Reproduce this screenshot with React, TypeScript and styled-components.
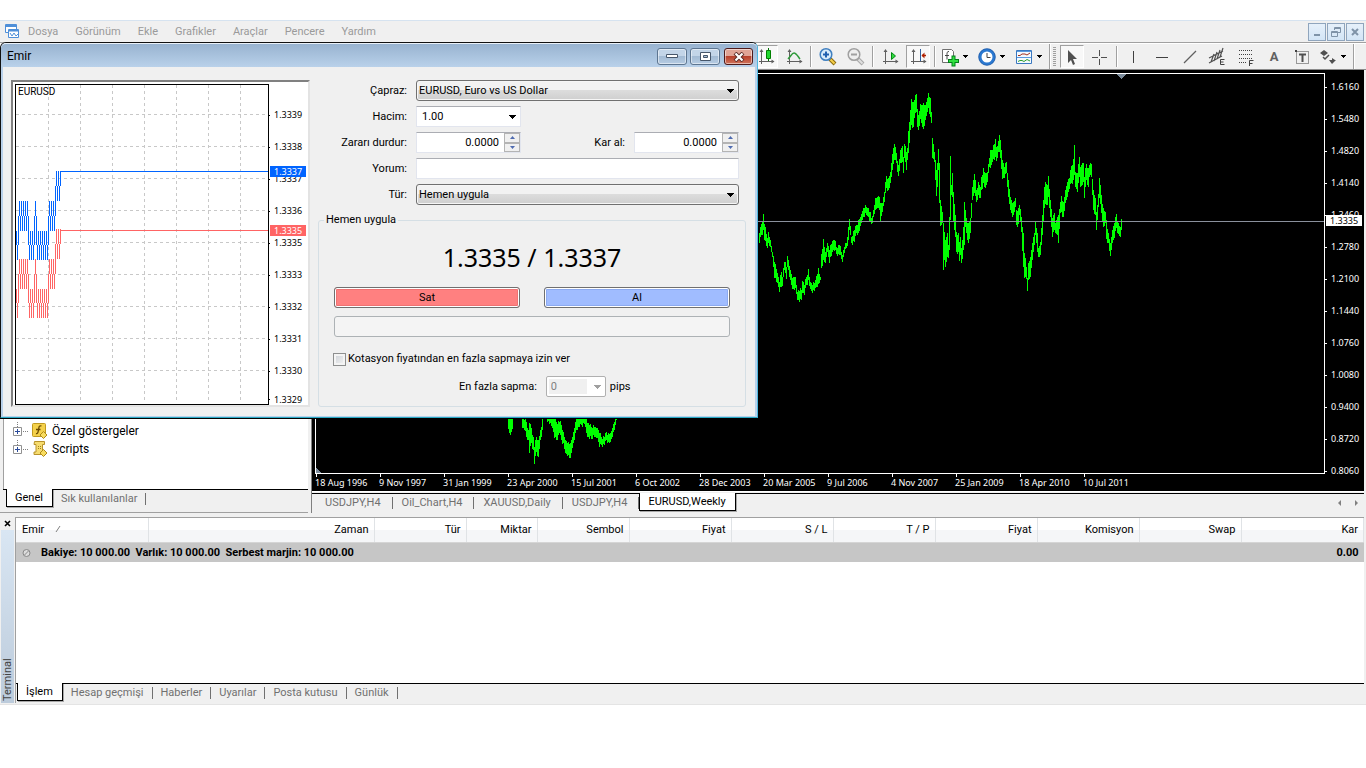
import React from 'react';
import styled, { createGlobalStyle, css } from 'styled-components';

const UI_FONT = 'Roboto, "Noto Sans", sans-serif';
const AXIS_FONT = '"Noto Sans", "Open Sans", sans-serif';

const GlobalStyle = createGlobalStyle`
  *, *::before, *::after { box-sizing: border-box; }
  body { margin: 0; background: #fff; color: #000; font: 11px/14px ${UI_FONT}; }
  button, input, select { font: inherit; color: inherit; margin: 0; }
  button { padding: 0; border: 0; background: none; }
`;

/* ---------- price history ---------- */

type Sample = [number, number, number];

// x, high, low in thirds of a pixel
const HISTORY: Sample[] = [
  [28,460,490],[33,432,465],[39,402,450],[44,432,480],[51,475,505],[55,455,490],[62,480,500],[66,515,530],[74,545,595],[82,580,610],
  [88,605,635],[93,577,620],[98,590,618],[103,545,570],[108,560,597],[113,528,560],[120,570,600],[126,595,628],[132,590,630],[137,592,625],
  [142,635,660],[148,632,665],[154,630,660],[158,603,640],[164,615,645],[168,590,615],[175,568,600],[180,605,628],[188,615,638],[196,600,625],
  [204,565,612],[210,590,600],[215,523,565],[221,478,540],[227,515,548],[233,490,515],[239,510,550],[246,484,515],[253,480,512],[260,500,522],
  [267,495,525],[276,525,545],[283,500,520],[290,488,505],[294,440,480],[298,418,450],[304,470,490],[312,450,485],[318,435,460],[324,420,460],
  [330,410,437],[338,392,420],[345,376,400],[352,385,408],[360,395,425],[364,415,433],[371,390,410],[376,355,390],[381,352,385],[388,352,390],
  [391,370,422],[398,370,395],[404,335,365],[410,288,325],[416,295,330],[422,275,310],[428,222,270],[433,193,240],[439,220,250],[445,255,287],
  [451,210,250],[457,198,245],[460,230,278],[464,193,235],[468,215,270],[473,205,240],[476,153,220],[481,90,150],[485,57,135],[489,65,140],
  [494,60,115],[499,42,95],[503,88,140],[506,105,150],[512,72,118],[517,75,140],[521,68,147],[527,75,120],[531,55,95],[535,38,85],
  [540,55,110],[544,95,130],[547,175,235],[553,215,245],[557,240,300],[560,270,347],[563,250,320],[565,207,270],[569,250,370],[572,360,437],
  [576,395,430],[579,430,570],[583,455,540],[587,480,560],[592,460,530],[596,495,535],[599,410,510],[601,228,420],[604,315,345],[607,278,350],
  [611,335,425],[615,405,470],[620,455,515],[625,460,515],[628,485,542],[632,472,525],[635,505,550],[639,440,510],[642,365,495],[646,390,440],
  [650,415,460],[656,430,488],[660,415,460],[664,370,415],[668,320,360],[673,283,340],[679,330,365],[684,305,345],[690,320,355],[695,290,330],
  [700,265,310],[706,280,325],[712,275,305],[717,235,260],[722,210,265],[728,210,245],[735,178,232],[739,200,242],[744,183,215],[748,165,215],
  [752,180,235],[757,240,298],[764,262,295],[769,245,280],[774,300,350],[780,350,390],[786,370,410],[791,365,405],[796,355,380],[800,390,435],
  [804,385,432],[809,375,405],[815,410,455],[820,460,560],[824,520,595],[828,562,598],[832,595,632],[836,550,600],[841,530,590],[846,490,540],
  [852,460,495],[857,425,465],[861,460,515],[866,505,530],[872,485,525],[878,405,465],[884,320,385],[887,306,372],[892,315,375],[896,288,350],
  [902,360,410],[907,415,470],[912,400,450],[917,430,460],[921,410,465],[925,405,490],[930,365,400],[934,348,395],[940,365,412],[946,330,370],
  [952,305,350],[958,293,328],[963,258,310],[969,238,300],[972,195,285],[977,275,320],[982,280,335],[987,232,290],[992,260,320],[996,248,315],
  [1000,250,305],[1003,290,353],[1009,252,300],[1014,265,320],[1019,255,290],[1024,252,290],[1029,330,390],[1035,355,405],[1040,395,450],
  [1044,342,380],[1049,295,355],[1054,345,400],[1059,385,440],[1065,395,430],[1070,420,478],[1076,460,490],[1082,490,527],[1087,450,490],
  [1093,430,475],[1100,402,445],[1106,430,462],[1110,440,470],[1114,418,450],
];

const EARLY_LOWS: Sample[][] = [
  [[566,530,568],[572,530,585],[577,530,566]],
  [[607,525,565],[612,540,570],[618,545,590],[624,570,600],[628,550,640],[634,565,610],[639,590,630],[643,620,672],[648,590,635],[654,600,650],[660,570,600],[664,560,590],[668,525,570]],
  [[682,525,545],[690,535,550],[697,530,565],[704,535,595],[710,545,600],[718,545,580],[724,555,600],[730,575,610],[736,600,640],[744,605,645],[751,610,655],[757,590,625],[764,565,600],[770,537,570],[776,520,560],[784,525,555],[792,530,552],[798,535,580],[806,550,590],[814,560,598],[820,555,585],[826,560,590],[832,565,595],[838,580,620],[844,590,615],[852,590,615],[858,577,600],[864,580,605],[870,580,605],[876,565,590],[882,545,570],[887,530,555],[890,515,540]],
];

function bars(samples: Sample[], originX: number, originY: number): string {
  const px = samples.map(([x, h, l]) => [originX + Math.floor(x / 3), originY + h / 3, originY + l / 3]);
  let d = '';
  for (let i = 0; i < px.length; i++) {
    const [x, h, l] = px[i];
    const next = px[i + 1] ?? [x + 1, h, l];
    const span = Math.max(1, next[0] - x);
    for (let k = 0; k < span; k++) {
      const t = k / span;
      const wiggle = k === 0 ? 0 : ((x + k) * 7) % 5 - 2;
      const top = Math.round(h + (next[1] - h) * t + wiggle);
      const bottom = Math.round(l + (next[2] - l) * t + wiggle);
      d += `M${x + k} ${top}h1V${Math.max(bottom, top + 3)}h-1z`;
    }
  }
  return d;
}

const CHART_PATH = [bars(HISTORY, 750, 80), ...EARLY_LOWS.map((part) => bars(part, 320, 240))].join('');

/* ---------- tick chart ---------- */

const range = (from: number, to: number) => {
  const out: number[] = [];
  for (let x = from; x <= to; x += 2) out.push(x);
  return out;
};

const TICK_BARS: { top: number; bottom: number; xs: number[] }[] = [
  { top: 171, bottom: 186, xs: [56, 58, 60] },
  { top: 186, bottom: 201, xs: [55, 57, 59] },
  { top: 201, bottom: 216, xs: [...range(19, 27), 35, ...range(49, 55)] },
  { top: 216, bottom: 231, xs: [...range(18, 28), 34, 36, ...range(48, 54)] },
  { top: 231, bottom: 245, xs: [16, 18, ...range(28, 48)] },
  { top: 245, bottom: 260, xs: [17, ...range(29, 33), ...range(37, 47)] },
];

const tickPath = (shift: number) =>
  TICK_BARS.map((r) => r.xs.map((x) => `M${x} ${r.top + shift}h1V${r.bottom + shift}h-1z`).join('')).join('');

/* ---------- shell ---------- */

const Page = styled.div`
  position: relative;
  min-width: 1100px;
  padding-top: 20px;
`;

const MenuBar = styled.nav`
  display: flex;
  align-items: center;
  height: 23px;
  padding: 0 2px 0 5px;
  background: #f0f0f0;
  border-top: 1px solid #d6e3f0;
  border-bottom: 1px solid #a0a0a0;
`;

const MenuList = styled.div`
  display: flex;
  gap: 17px;
  margin-left: 8px;
  flex: 1;
`;

const MenuItem = styled.button`
  color: #9a9a9a;
`;

const MdiButton = styled.button`
  display: grid;
  place-items: center;
  width: 18px;
  height: 18px;
  margin-left: 1px;
  border: 1px solid #8fa5bd;
  background: linear-gradient(#e6f0fa, #d3e5f6);
`;

const Toolbar = styled.div`
  display: flex;
  align-items: center;
  gap: 4px;
  height: 27px;
  padding-left: 754px;
  background: #f0f0f0;
  border-top: 1px solid #fff;
  border-bottom: 1px solid #8a8a8a;
`;

const ToolButton = styled.button<{ $pressed?: boolean; $menu?: boolean }>`
  display: flex;
  align-items: center;
  justify-content: ${(p) => (p.$menu ? 'flex-start' : 'center')};
  gap: 2px;
  flex: none;
  width: ${(p) => (p.$menu ? 33 : 24)}px;
  height: 23px;
  ${(p) => p.$pressed && css`
    background: #f8f8f8;
    border: 1px solid #fff;
    border-top-color: #a0a0a0;
    border-left-color: #a0a0a0;
  `}
`;

const Separator = styled.span`
  flex: none;
  width: 2px;
  height: 21px;
  border-left: 1px solid #a0a0a0;
  border-right: 1px solid #fff;
`;

const BandEdge = styled(Separator)`
  height: 25px;
  margin-left: -2px;
`;

const BandStart = styled.span`
  display: flex;
  align-items: center;
  gap: 2px;
`;

const Grip = styled.span`
  flex: none;
  width: 3px;
  height: 19px;
  background: repeating-linear-gradient(#a0a0a0 0 1px, #f0f0f0 1px 2px);
`;

const Workspace = styled.div`
  display: flex;
  background: #f0f0f0;
`;

/* ---------- navigator ---------- */

const Navigator = styled.aside`
  display: flex;
  flex-direction: column;
  flex: none;
  width: 308px;
  padding: 0 0 3px 3px;
  border-bottom: 1px solid #a0a0a0;
`;

const Tree = styled.ul`
  display: flex;
  flex-direction: column;
  justify-content: flex-end;
  flex: 1;
  margin: 0;
  padding: 0 0 31px 9px;
  list-style: none;
  background: #fff;
  border-left: 1px solid #a0a0a0;
`;

const TreeItem = styled.li`
  display: flex;
  align-items: center;
  height: 18px;
  font-size: 12px;
  svg + svg { margin-right: 4px; }
`;

const TabStrip = styled.div<{ $inset?: number }>`
  display: flex;
  align-items: flex-start;
  height: 20px;
  padding-left: ${(p) => p.$inset ?? 0}px;
  background: #f0f0f0;
  border-top: 1px solid #000;
`;

const Tab = styled.button<{ $active?: boolean; $roomy?: boolean }>`
  position: relative;
  flex: none;
  height: 18px;
  padding: ${(p) => (p.$roomy ? '0 12px 0 9px' : '0 9px 0 8px')};
  color: #707070;
  ${(p) => p.$active
    ? css`
        margin-top: -1px;
        padding: 0 9px 0 8px;
        color: #000;
        background: #fff;
        border: 1px solid #000;
        border-top: 0;
        box-shadow: 1px 1px 0 #a8a8a8;
      `
    : css`
        &::after {
          content: '';
          position: absolute;
          right: 0;
          top: 3px;
          height: 12px;
          border-right: 1px solid #707070;
        }
      `}
`;

/* ---------- chart ---------- */

const ChartColumn = styled.main`
  display: flex;
  flex-direction: column;
  flex: 1;
  min-width: 0;
  margin: 0 2px 0 3px;
  border-left: 1px solid #808080;
`;

const ChartFrame = styled.section`
  display: flex;
  margin-bottom: 1px;
  padding: 3px 0 0 3px;
  color: #fff;
  background: #000;
  border-bottom: 1px solid #fff;
  font-family: ${AXIS_FONT};
  font-size: 9px;
`;

const PlotColumn = styled.div`
  flex: 1;
  min-width: 0;
`;

const Plot = styled.svg`
  display: block;
  width: 100%;
  height: 401px;
  border: 1px solid #fff;
`;

const DateAxis = styled.div`
  display: flex;
  height: 17px;
  overflow: hidden;
`;

const DateLabel = styled.span`
  position: relative;
  flex: none;
  width: 64px;
  line-height: 17px;
  white-space: nowrap;
  &::before {
    content: '';
    position: absolute;
    left: 1px;
    top: 0;
    height: 3px;
    border-left: 1px solid #fff;
  }
`;

const PriceAxis = styled.div`
  position: relative;
  width: 39px;
  margin-top: -2px;
`;

const PriceLabel = styled.div`
  display: flex;
  align-items: center;
  gap: 4px;
  height: 32px;
  &::before {
    content: '';
    width: 2px;
    height: 1px;
    background: #fff;
  }
`;

const CurrentPrice = styled.div<{ $top: number; $left: number; $fill: string; $ink: string }>`
  position: absolute;
  top: ${(p) => p.$top}px;
  left: ${(p) => p.$left}px;
  width: 36px;
  height: 11px;
  padding-left: 4px;
  line-height: 11px;
  font-family: ${AXIS_FONT};
  font-size: 9px;
  color: ${(p) => p.$ink};
  background: ${(p) => p.$fill};
`;

const TabScroll = styled.div`
  display: flex;
  gap: 12px;
  margin: 5px 5px 0 auto;
`;

/* ---------- terminal ---------- */

const Terminal = styled.section`
  display: flex;
  padding: 4px 0 1px;
  background: #f0f0f0;
  border-bottom: 1px solid #e4e4e4;
`;

const SideRail = styled.div`
  display: flex;
  flex-direction: column;
  align-items: center;
  width: 14px;
  margin-right: 1px;
`;

const CloseGlyph = styled.button`
  display: grid;
  place-items: center;
  width: 14px;
  height: 13px;
`;

const RailTitle = styled.div`
  flex: 1;
  width: 13px;
  padding: 2px 0;
  line-height: 13px;
  color: #444;
  background: linear-gradient(#bccbdb, #d9e6f3);
  writing-mode: vertical-rl;
  transform: rotate(180deg);
`;

const TerminalBody = styled.div`
  flex: 1;
  min-width: 0;
  margin-right: 2px;
  border-top: 1px solid #a0a0a0;
  border-left: 1px solid #a0a0a0;
  background: #fff;
`;

const OrdersArea = styled.div`
  min-height: 165px;
`;

const Orders = styled.table`
  width: 100%;
  table-layout: fixed;
  border-collapse: collapse;
`;

const HeadCell = styled.th<{ $first?: boolean }>`
  height: 24px;
  padding: 1px 5px 0 6px;
  font-weight: 400;
  text-align: ${(p) => (p.$first ? 'left' : 'right')};
  background: linear-gradient(#fff 50%, #f5f6f8 50%);
  border-right: 1px solid #e0e3e6;
  border-bottom: 1px solid #d5d5d5;
`;

const BalanceCell = styled.td<{ $end?: boolean }>`
  height: 20px;
  padding: 1px 5px 0 6px;
  font-weight: 700;
  white-space: pre;
  text-align: ${(p) => (p.$end ? 'right' : 'left')};
  background: #c6c6c6;
`;

const BalanceIcon = styled.svg`
  margin-right: 10px;
  vertical-align: -2px;
`;

/* ---------- order dialog ---------- */

const Dialog = styled.div`
  position: absolute;
  left: 0;
  top: 42px;
  width: 758px;
  padding: 0 2px 1px;
  background: #b9d1ea;
  border: 1px solid #111;
  border-right-color: #4fb8e0;
  border-bottom-color: #2aa9c4;
  border-radius: 6px 6px 0 0;
  box-shadow: 0 1px 0 #000;
`;

const TitleBar = styled.header`
  display: flex;
  align-items: flex-start;
  height: 24px;
  margin: 0 -2px;
  padding: 4px 4px 0 6px;
  background: linear-gradient(#98b3d0, #b9d1ea);
  border-top: 1px solid #e8f0f8;
  border-radius: 5px 5px 0 0;
`;

const Title = styled.h1`
  flex: 1;
  margin: 1px 0 0;
  font-size: 12px;
  line-height: 14px;
  font-weight: 400;
`;

const CaptionButton = styled.button<{ $close?: boolean }>`
  display: grid;
  place-items: center;
  width: ${(p) => (p.$close ? 29 : 30)}px;
  height: 17px;
  margin-left: ${(p) => (p.$close ? 4 : 3)}px;
  border: 1px solid ${(p) => (p.$close ? '#4e1a1a' : '#5d7590')};
  border-radius: 3px;
  box-shadow: inset 0 0 0 1px rgba(255, 255, 255, 0.5);
  background: ${(p) => (p.$close
    ? 'linear-gradient(#e0a496 45%, #b8402c 50%, #d0745c)'
    : 'linear-gradient(#c3d5e8 45%, #a3bbd4 50%, #b6cce3)')};
`;

const DialogBody = styled.div`
  display: flex;
  gap: 8px;
  padding: 13px 9px 9px 8px;
  background: #f0f0f0;
`;

const TickPanel = styled.div`
  position: relative;
  display: flex;
  flex: none;
  width: 299px;
  height: 327px;
  padding: 2px 0 0 2px;
  background: #fff;
  border: 2px solid #e3e3e3;
  border-top-color: #808080;
  border-left-color: #808080;
`;

const TickPlot = styled.svg`
  flex: none;
  width: 254px;
  height: 321px;
  border: 1px solid #000;
`;

const TickAxis = styled.div`
  padding-top: 15px;
  font-family: ${AXIS_FONT};
  font-size: 9px;
`;

const TickLabel = styled.div`
  display: flex;
  align-items: center;
  gap: 4px;
  height: 32px;
  &:last-child { height: 25px; }
  &::before {
    content: '';
    width: 1px;
    height: 1px;
    background: #000;
  }
`;

const OrderForm = styled.form`
  flex: 1;
`;

const Fields = styled.div`
  display: grid;
  grid-template-columns: 89px 105px 1fr 105px;
  gap: 5px 9px;
  align-items: center;
  padding-right: 7px;
`;

const FieldLabel = styled.label<{ $column?: number }>`
  grid-column: ${(p) => p.$column ?? 1};
  justify-self: end;
  white-space: nowrap;
`;

const field = css`
  width: 100%;
  height: 21px;
  border: 1px solid #e2e5ee;
  border-top-color: #abadb3;
  background: #fff;
`;

const Wide = styled.div`
  position: relative;
  grid-column: 2 / -1;
`;

const Cell = styled.div<{ $column?: number }>`
  position: relative;
  grid-column: ${(p) => p.$column ?? 2};
`;

const TextField = styled.input<{ $numeric?: boolean }>`
  ${field}
  display: block;
  padding: 0 ${(p) => (p.$numeric ? 21 : 5)}px 0 5px;
  text-align: ${(p) => (p.$numeric ? 'right' : 'left')};
`;

const Select = styled.select<{ $look: 'raised' | 'flat' | 'disabled' }>`
  ${field}
  display: block;
  appearance: none;
  opacity: 1;
  padding: 0 2px;
  ${(p) => p.$look === 'raised' && css`
    border: 1px solid #707070;
    border-radius: 3px;
    background: linear-gradient(#f2f2f2 50%, #dcdcdc 50%, #cfcfcf);
    box-shadow: inset 0 0 0 1px #f6f6f6;
  `}
  ${(p) => p.$look === 'flat' && css`
    padding-left: 5px;
  `}
  ${(p) => p.$look === 'disabled' && css`
    padding-left: 4px;
    color: #808080;
    border: 1px solid #b0b0b0;
    border-radius: 2px;
    background: linear-gradient(#f0f0f0, #f0f0f0) 2px 2px / 38px 15px no-repeat, #fff;
  `}
`;

const Caret = styled.span`
  position: absolute;
  right: 5px;
  top: 9px;
  pointer-events: none;
  svg { display: block; }
`;

const Spinner = styled.div`
  position: absolute;
  right: 1px;
  top: 1px;
  display: flex;
  flex-direction: column;
  width: 16px;
  height: 19px;
`;

const SpinButton = styled.button`
  display: grid;
  place-items: center;
  flex: 1;
  background: #f0f0f0;
  border: 1px solid #b4b4b4;
`;

const Group = styled.fieldset`
  min-width: 0;
  margin: 8px 0 0;
  padding: 0 15px 9px;
  border: 1px solid #d5dfe5;
  border-radius: 3px;
`;

const Legend = styled.legend`
  margin-left: -10px;
  padding: 0 2px;
`;

const Quote = styled.output`
  display: block;
  margin: 11px 0;
  font-family: ${AXIS_FONT};
  font-size: 25px;
  line-height: 38px;
  text-align: center;
`;

const TradeRow = styled.div`
  display: grid;
  grid-template-columns: 1fr 1fr;
  gap: 24px;
`;

const TradeButton = styled.button<{ $side: 'sell' | 'buy' }>`
  height: 21px;
  border: 1px solid #707070;
  border-radius: 3px;
  background: ${(p) => (p.$side === 'sell' ? '#ff8080' : '#a0bcff')};
  box-shadow: inset 0 0 0 1px #fff, inset 0 0 0 2px ${(p) => (p.$side === 'sell' ? '#ee7272' : '#8caaf0')};
`;

const StatusButton = styled.button`
  display: block;
  width: 100%;
  height: 21px;
  margin-top: 8px;
  background: #f4f4f4;
  border: 1px solid #adb2b5;
  border-radius: 3px;
`;

const CheckRow = styled.label`
  display: flex;
  align-items: center;
  gap: 2px;
  height: 16px;
  margin: 14px 0 9px -1px;
`;

const CheckBox = styled.input`
  appearance: none;
  width: 13px;
  height: 13px;
  border: 1px solid #8e8f8f;
  background: linear-gradient(135deg, #cbcfd5, #f6f6f6);
  box-shadow: inset 0 0 0 2px #f4f4f4;
`;

const DeviationRow = styled.div`
  display: flex;
  align-items: center;
  gap: 4px;
  padding-left: 125px;
`;

const DeviationField = styled.div`
  position: relative;
  width: 60px;
  margin-left: 5px;
`;

/* ---------- small drawings ---------- */

const DownCaret = ({ fill = '#000' }: { fill?: string }) => (
  <svg width="7" height="4" shapeRendering="crispEdges"><path d="M0 0h7v1h-1v1h-1v1h-1v1h-1v-1h-1v-1h-1v-1h-1z" fill={fill} /></svg>
);

const SmallCaret = () => (
  <svg width="7" height="3" shapeRendering="crispEdges"><path d="M1 0h5v1h-1v1h-1v1h-1v-1h-1v-1h-1z" fill="#000" /></svg>
);

const Icon = ({ children }: { children: React.ReactNode }) => (
  <svg width="20" height="20" viewBox="0 0 20 20" fill="none" stroke="#606060">{children}</svg>
);

const Axes = () => (
  <>
    <path d="M5.500 3v14M3 14.500h15" />
    <path d="M5.500 2l-2 3h4zM18.500 14.500l-3-2v4z" fill="#606060" stroke="none" />
  </>
);

const CandleIcon = () => (
  <Icon><Axes /><path d="M12.500 1v13" stroke="#007000" /><path d="M10.500 3.500h4v8h-4z" fill="#20d830" stroke="#008000" /></Icon>
);
const LineIcon = () => <Icon><Axes /><path d="M4 12c3-3 4-6 6-6s3 2 6 6" stroke="#2f9a3a" strokeWidth="1.500" /></Icon>;
const ZoomIcon = ({ out }: { out?: boolean }) => (
  <Icon>
    <path d="M12 12l5 5" stroke={out ? '#a8a8a8' : '#8a6a10'} strokeWidth="4" />
    <path d="M12.500 12.500l4 4" stroke={out ? '#e0e0e0' : '#f6d04a'} strokeWidth="2" />
    <circle cx="8" cy="7.500" r="5.800" fill={out ? '#eee' : '#d8ecfb'} stroke={out ? '#a0a0a0' : '#3f7fc0'} strokeWidth="1.500" />
    <path d={out ? 'M5 7.500h6' : 'M5 7.500h6M8 4.500v6'} stroke={out ? '#a0a0a0' : '#2060b0'} strokeWidth="2" />
  </Icon>
);
const AutoScrollIcon = () => <Icon><Axes /><path d="M11.500 5.500v7l4-3.500z" fill="#30d840" stroke="#008a10" /></Icon>;
const ShiftIcon = () => (
  <Icon><Axes /><path d="M12.500 2v12" stroke="#3060a0" /><path d="M18 8.500h-4" stroke="#b02000" strokeWidth="1.500" /><path d="M16.500 5.500v6l-3-3z" fill="#b02000" stroke="none" /></Icon>
);
const IndicatorIcon = () => (
  <Icon>
    <path d="M2.500 2.500h9l2 2v11h-11z" fill="#fff" stroke="#707070" />
    <path d="M9 4.500c-2 0-2 1-2 3v5M5 8.500h4" stroke="#444" />
    <path d="M13.500 8.500v11M8 14h11" stroke="#00801a" strokeWidth="4" />
    <path d="M13.500 9.500v9M9 14h9" stroke="#30e040" strokeWidth="2" />
  </Icon>
);
const ClockIcon = () => (
  <Icon><circle cx="10" cy="10" r="7" fill="#fff" stroke="#2a78d0" strokeWidth="3" /><circle cx="10" cy="10" r="8.300" stroke="#1a4f98" strokeWidth="0.600" /><path d="M10 6v4.500h3.500" stroke="#444" /></Icon>
);
const TemplateIcon = () => (
  <Icon>
    <path d="M2.500 3.500h15v13h-15z" fill="#f4faff" stroke="#3a78c0" /><path d="M3 4.500h14M3 10.500h14" stroke="#5a9ae0" />
    <path d="M4 8.500h2l2-1.500h3l2 1 3-2" stroke="#a03020" /><path d="M4 14.500l2-1h2l2 1 3-2 3 1.500" stroke="#30a030" />
  </Icon>
);
const ArrowIcon = () => <Icon><path d="M6 3v13l3-3 2 5 2-1-2-5h4z" fill="#505050" stroke="none" /></Icon>;
const CrosshairIcon = () => <Icon><path d="M9.500 3v6M9.500 12v6M2 10.500h6M11 10.500h6" stroke="#505050" /></Icon>;
const VLineIcon = () => <Icon><path d="M9.500 4v12" stroke="#404040" /></Icon>;
const HLineIcon = () => <Icon><path d="M4 10.500h12" stroke="#404040" /></Icon>;
const TrendIcon = () => <Icon><path d="M4 16L16 4" stroke="#606060" strokeWidth="1.300" /></Icon>;
const ChannelIcon = () => (
  <Icon><path d="M1 11l14-7M1 16l13-7M3 15l3-8M6 14l3-9M9 12l3-9M12 10l3-9" stroke="#505050" strokeWidth="1.200" /><path d="M16.500 12.500h-4v5h4M12.500 15h3" stroke="#404040" /></Icon>
);
const FiboIcon = () => (
  <Icon><path d="M3 3.500h14M3 7.500h14M3 11.500h14M3 15.500h8" strokeDasharray="1 1" stroke="#404040" /><path d="M13.500 19v-5.500h4M13.500 16.500h3" stroke="#404040" /></Icon>
);
const LabelIcon = () => (
  <Icon><path d="M4.500 4.500h12v12h-12z" strokeDasharray="1 1" stroke="#404040" /><path d="M3 3h2v2h-2z" fill="#404040" stroke="none" /><path d="M7 7.500h7M10.500 8v7" stroke="#505050" strokeWidth="2" /></Icon>
);
const MarksIcon = () => (
  <Icon>
    <path d="M6 3l4 3-4 3-4-3zM11 13l3 0 0-2 3 2 1 0-4 4z" fill="#505050" stroke="none" />
    <path d="M5 10l2 2 4-4" strokeWidth="1.500" stroke="#505050" />
  </Icon>
);

const ToolLetter = styled.span`
  color: #606060;
  font-size: 13px;
  font-weight: 700;
`;

const AppIcon = () => (
  <svg width="15" height="15" viewBox="0 0 15 15" fill="none" stroke="#4f8fd8">
    <path d="M0.500 0.500h11v8h-11z" fill="#fff" /><path d="M1 2h10" strokeWidth="2" />
    <path d="M3.500 5.500h10v8h-10z" fill="#fff" /><path d="M4 6.500h9" strokeWidth="2" />
    <path d="M5 9l2 3 2-3 2 3 2-2" />
  </svg>
);

const Expander = () => (
  <svg width="18" height="18" viewBox="0 0 18 18" fill="none">
    <path d="M4.500 0v5M10 9.500h6" stroke="#808080" strokeDasharray="1 1" />
    <path d="M0.500 5.500h8v8h-8z" fill="#fff" stroke="#919191" />
    <path d="M2 9.500h5M4.500 7v5" stroke="#2b4b9b" />
  </svg>
);

const FunctionIcon = () => (
  <svg width="17" height="16" viewBox="0 0 17 16" fill="none">
    <rect x="1.500" y=".5" width="13" height="13" rx="1" fill="#f4d14c" stroke="#c09a20" />
    <path d="M10.500 3c-3-1-2.500 2-3 4s-.5 4-2.500 3.500M5 6.500h4.500" stroke="#6a4a00" strokeWidth="1.300" />
    <path d="M12.500 8.500l3.500 3.500-3.500 3.500-3.500-3.500z" fill="#f8dc60" stroke="#b08a18" />
  </svg>
);

const ScriptIcon = () => (
  <svg width="17" height="16" viewBox="0 0 17 16" fill="none">
    <path d="M3.500 .5h10v3h-2v7h1v3h-9.500v-2.500h2v-7.500h-2z" fill="#f6dc70" stroke="#b8922a" />
    <path d="M7 5.500h3M7 7.500h3" stroke="#a08020" strokeDasharray="1 1" />
    <path d="M12.500 8.500l3.500 3.500-3.500 3.500-3.500-3.500z" fill="#f8dc60" stroke="#b08a18" />
  </svg>
);

/* ---------- data ---------- */

const MENU = ['Dosya', 'Görünüm', 'Ekle', 'Grafikler', 'Araçlar', 'Pencere', 'Yardım'];
const PRICES = ['1.6160', '1.5480', '1.4820', '1.4140', '1.3460', '1.2780', '1.2100', '1.1440', '1.0760', '1.0080', '0.9400', '0.8720', '0.8060'];
const DATES = ['18 Aug 1996', '9 Nov 1997', '31 Jan 1999', '23 Apr 2000', '15 Jul 2001', '6 Oct 2002', '28 Dec 2003', '20 Mar 2005', '9 Jul 2006', '4 Nov 2007', '25 Jan 2009', '18 Apr 2010', '10 Jul 2011'];
const TICKS = ['1.3339', '1.3338', '1.3337', '1.3336', '1.3335', '1.3333', '1.3332', '1.3331', '1.3330', '1.3329'];
const CHART_TABS = ['USDJPY,H4', 'Oil_Chart,H4', 'XAUUSD,Daily', 'USDJPY,H4', 'EURUSD,Weekly'];
const TERMINAL_TABS = ['İşlem', 'Hesap geçmişi', 'Haberler', 'Uyarılar', 'Posta kutusu', 'Günlük'];
const COLUMNS: [string, number?][] = [
  ['Emir', 132], ['Zaman', 226], ['Tür', 92], ['Miktar', 71], ['Sembol', 92], ['Fiyat', 102], ['S / L', 102],
  ['T / P', 102], ['Fiyat', 102], ['Komisyon', 102], ['Swap', 102], ['Kar'],
];

const Spin = () => (
  <Spinner>
    <SpinButton type="button" aria-label="Artır"><svg width="5" height="3"><path d="M0 3l2.500-3 2.500 3z" fill="#4f6bb0" /></svg></SpinButton>
    <SpinButton type="button" aria-label="Azalt"><svg width="5" height="3"><path d="M0 0h5l-2.500 3z" fill="#4f6bb0" /></svg></SpinButton>
  </Spinner>
);

const OrderDialog = () => (
  <Dialog role="dialog" aria-labelledby="order-title">
    <TitleBar>
      <Title id="order-title">Emir</Title>
      <CaptionButton aria-label="Simge durumuna küçült"><svg width="12" height="5"><path d="M.5.5h11v3h-11z" fill="#fff" stroke="#46566a" /></svg></CaptionButton>
      <CaptionButton aria-label="Ekranı kapla"><svg width="11" height="9"><path d="M.5.5h10v8h-10z" fill="#fff" stroke="#46566a" /><path d="M3.500 3.500h4v2h-4z" fill="#a9bfd6" stroke="#46566a" /></svg></CaptionButton>
      <CaptionButton $close aria-label="Kapat"><svg width="12" height="10"><path d="M2 1l8 8M10 1l-8 8" stroke="#5a2a26" strokeWidth="4" /><path d="M2.500 1.500l7 7M9.500 1.500l-7 7" stroke="#fff" strokeWidth="2.200" /></svg></CaptionButton>
    </TitleBar>
    <DialogBody>
      <TickPanel>
        <TickPlot shapeRendering="crispEdges">
          <g transform="translate(-16 -85)">
            <g stroke="#c8c8c8" strokeDasharray="3 3">
              {[48, 80, 112, 144, 176, 208, 240].map((x) => <path key={x} d={`M${x + 0.5} 85V403`} />)}
              {[114, 146, 178, 210, 242, 274, 306, 338, 370].map((y) => <path key={y} d={`M16 ${y + 0.5}H268`} />)}
            </g>
            <path d={tickPath(58)} fill="#ff6464" />
            <path d="M60 230h208v1H60z" fill="#ff6464" />
            <path d={tickPath(0)} fill="#0064ff" />
            <path d="M60 171h208v1H60z" fill="#0064ff" />
            <text x="18" y="95" fontSize="10" fill="#000">EURUSD</text>
          </g>
        </TickPlot>
        <TickAxis>{TICKS.map((t) => <TickLabel key={t}>{t}</TickLabel>)}</TickAxis>
        <CurrentPrice $top={84} $left={257} $fill="#0064ff" $ink="#fff">1.3337</CurrentPrice>
        <CurrentPrice $top={143} $left={257} $fill="#ff6464" $ink="#fff">1.3335</CurrentPrice>
      </TickPanel>
      <OrderForm onSubmit={(e) => e.preventDefault()}>
        <Fields>
          <FieldLabel htmlFor="symbol">Çapraz:</FieldLabel>
          <Wide>
            <Select id="symbol" $look="raised"><option>EURUSD, Euro vs US Dollar</option></Select>
            <Caret><DownCaret /></Caret>
          </Wide>
          <FieldLabel htmlFor="volume">Hacim:</FieldLabel>
          <Cell>
            <Select id="volume" $look="flat"><option>1.00</option></Select>
            <Caret><DownCaret /></Caret>
          </Cell>
          <FieldLabel htmlFor="stop-loss">Zararı durdur:</FieldLabel>
          <Cell>
            <TextField id="stop-loss" $numeric defaultValue="0.0000" />
            <Spin />
          </Cell>
          <FieldLabel htmlFor="take-profit" $column={3}>Kar al:</FieldLabel>
          <Cell $column={4}>
            <TextField id="take-profit" $numeric defaultValue="0.0000" />
            <Spin />
          </Cell>
          <FieldLabel htmlFor="comment">Yorum:</FieldLabel>
          <Wide><TextField id="comment" /></Wide>
          <FieldLabel htmlFor="kind">Tür:</FieldLabel>
          <Wide>
            <Select id="kind" $look="raised"><option>Hemen uygula</option></Select>
            <Caret><DownCaret /></Caret>
          </Wide>
        </Fields>
        <Group>
          <Legend>Hemen uygula</Legend>
          <Quote>1.3335 / 1.3337</Quote>
          <TradeRow>
            <TradeButton $side="sell" type="button">Sat</TradeButton>
            <TradeButton $side="buy" type="button">Al</TradeButton>
          </TradeRow>
          <StatusButton type="button" disabled aria-label="Durum" />
          <CheckRow>
            <CheckBox type="checkbox" />
            Kotasyon fiyatından en fazla sapmaya izin ver
          </CheckRow>
          <DeviationRow>
            <label htmlFor="deviation">En fazla sapma:</label>
            <DeviationField>
              <Select id="deviation" $look="disabled" disabled><option>0</option></Select>
              <Caret><DownCaret fill="#a0a0a0" /></Caret>
            </DeviationField>
            <span>pips</span>
          </DeviationRow>
        </Group>
      </OrderForm>
    </DialogBody>
  </Dialog>
);

export default function App() {
  return (
    <Page>
      <GlobalStyle />
      <MenuBar>
        <AppIcon />
        <MenuList>{MENU.map((m) => <MenuItem key={m}>{m}</MenuItem>)}</MenuList>
        <MdiButton aria-label="Küçült"><svg width="10" height="10"><path d="M2 8h6" stroke="#7f93a8" strokeWidth="2" /></svg></MdiButton>
        <MdiButton aria-label="Geri yükle"><svg width="10" height="10" fill="none" stroke="#7f93a8"><path d="M3.500 3V.5h6v5H7M3 1.500h7M.5 4.500h6v5h-6zM1 5.500h6" /></svg></MdiButton>
        <MdiButton aria-label="Kapat"><svg width="10" height="10"><path d="M2 2l6 6M8 2l-6 6" stroke="#7f93a8" strokeWidth="2" /></svg></MdiButton>
      </MenuBar>
      <Toolbar>
        <ToolButton $pressed aria-label="Mum grafiği"><CandleIcon /></ToolButton>
        <ToolButton aria-label="Çizgi grafiği"><LineIcon /></ToolButton>
        <Separator />
        <ToolButton aria-label="Yakınlaştır"><ZoomIcon /></ToolButton>
        <ToolButton aria-label="Uzaklaştır"><ZoomIcon out /></ToolButton>
        <Separator />
        <ToolButton aria-label="Otomatik kaydır"><AutoScrollIcon /></ToolButton>
        <ToolButton $pressed aria-label="Grafiği ötele"><ShiftIcon /></ToolButton>
        <Separator />
        <ToolButton $menu aria-label="Göstergeler"><IndicatorIcon /><SmallCaret /></ToolButton>
        <ToolButton $menu aria-label="Dönemler"><ClockIcon /><SmallCaret /></ToolButton>
        <ToolButton $menu aria-label="Şablonlar"><TemplateIcon /><SmallCaret /></ToolButton>
        <BandStart><BandEdge /><Grip /></BandStart>
        <ToolButton $pressed aria-label="İmleç"><ArrowIcon /></ToolButton>
        <ToolButton aria-label="Artı imleç"><CrosshairIcon /></ToolButton>
        <Separator />
        <ToolButton aria-label="Dikey çizgi"><VLineIcon /></ToolButton>
        <ToolButton aria-label="Yatay çizgi"><HLineIcon /></ToolButton>
        <ToolButton aria-label="Trend çizgisi"><TrendIcon /></ToolButton>
        <ToolButton aria-label="Kanal"><ChannelIcon /></ToolButton>
        <ToolButton aria-label="Fibonacci"><FiboIcon /></ToolButton>
        <ToolButton aria-label="Metin"><ToolLetter>A</ToolLetter></ToolButton>
        <ToolButton aria-label="Metin etiketi"><LabelIcon /></ToolButton>
        <ToolButton $menu aria-label="Oklar"><MarksIcon /><SmallCaret /></ToolButton>
        <BandEdge />
      </Toolbar>
      <Workspace>
        <Navigator>
          <Tree>
            <TreeItem><Expander /><FunctionIcon />Özel göstergeler</TreeItem>
            <TreeItem><Expander /><ScriptIcon />Scripts</TreeItem>
          </Tree>
          <TabStrip $inset={3}>
            <Tab $active>Genel</Tab>
            <Tab>Sık kullanılanlar</Tab>
          </TabStrip>
        </Navigator>
        <ChartColumn>
          <ChartFrame>
            <PlotColumn>
              <Plot shapeRendering="crispEdges">
                <path d="M0 394l5 5h-5z" fill="#7b8b9b" />
                <path d="M800 0h10l-5 5z" fill="#7b8b9b" />
                <g transform="translate(-316 -74)"><path d={CHART_PATH} fill="#0f0" /></g>
                <line x1="0" x2="100%" y1="147.500" y2="147.500" stroke="#8a909c" />
              </Plot>
              <DateAxis>{DATES.map((d) => <DateLabel key={d}>{d}</DateLabel>)}</DateAxis>
            </PlotColumn>
            <PriceAxis>
              {PRICES.map((p) => <PriceLabel key={p}>{p}</PriceLabel>)}
              <CurrentPrice $top={144} $left={1} $fill="#fff" $ink="#000">1.3335</CurrentPrice>
            </PriceAxis>
          </ChartFrame>
          <TabStrip $inset={4}>
            {CHART_TABS.map((t, i) => <Tab key={i} $roomy $active={i === 4}>{t}</Tab>)}
            <TabScroll>
              <svg width="5" height="8"><path d="M4 1L1 4l3 3z" fill="#808080" /></svg>
              <svg width="5" height="8"><path d="M1 1l3 3-3 3z" fill="#808080" /></svg>
            </TabScroll>
          </TabStrip>
        </ChartColumn>
      </Workspace>
      <Terminal>
        <SideRail>
          <CloseGlyph aria-label="Kapat"><svg width="7" height="7"><path d="M1 1l5 5M6 1l-5 5" stroke="#000" strokeWidth="1.600" /></svg></CloseGlyph>
          <RailTitle>Terminal</RailTitle>
        </SideRail>
        <TerminalBody>
          <OrdersArea>
            <Orders>
              <colgroup>{COLUMNS.map(([, w], i) => <col key={i} width={w} />)}</colgroup>
              <thead>
                <tr>
                  {COLUMNS.map(([name], i) => (
                    <HeadCell key={i} $first={i === 0} scope="col">
                      {name}
                      {i === 0 && <svg width="24" height="8"><path d="M12 7l4-6" stroke="#808080" /></svg>}
                    </HeadCell>
                  ))}
                </tr>
              </thead>
              <tbody>
                <tr>
                  <BalanceCell colSpan={11}>
                    <BalanceIcon width="9" height="10"><circle cx="4.500" cy="5" r="3.500" fill="#ddd" stroke="#888" /><path d="M2.500 7l4-4" stroke="#888" /></BalanceIcon>
                    {'Bakiye: 10 000.00  Varlık: 10 000.00  Serbest marjin: 10 000.00'}
                  </BalanceCell>
                  <BalanceCell $end>0.00</BalanceCell>
                </tr>
              </tbody>
            </Orders>
          </OrdersArea>
          <TabStrip $inset={1}>
            {TERMINAL_TABS.map((t, i) => <Tab key={t} $active={i === 0}>{t}</Tab>)}
          </TabStrip>
        </TerminalBody>
      </Terminal>
      <OrderDialog />
    </Page>
  );
}
